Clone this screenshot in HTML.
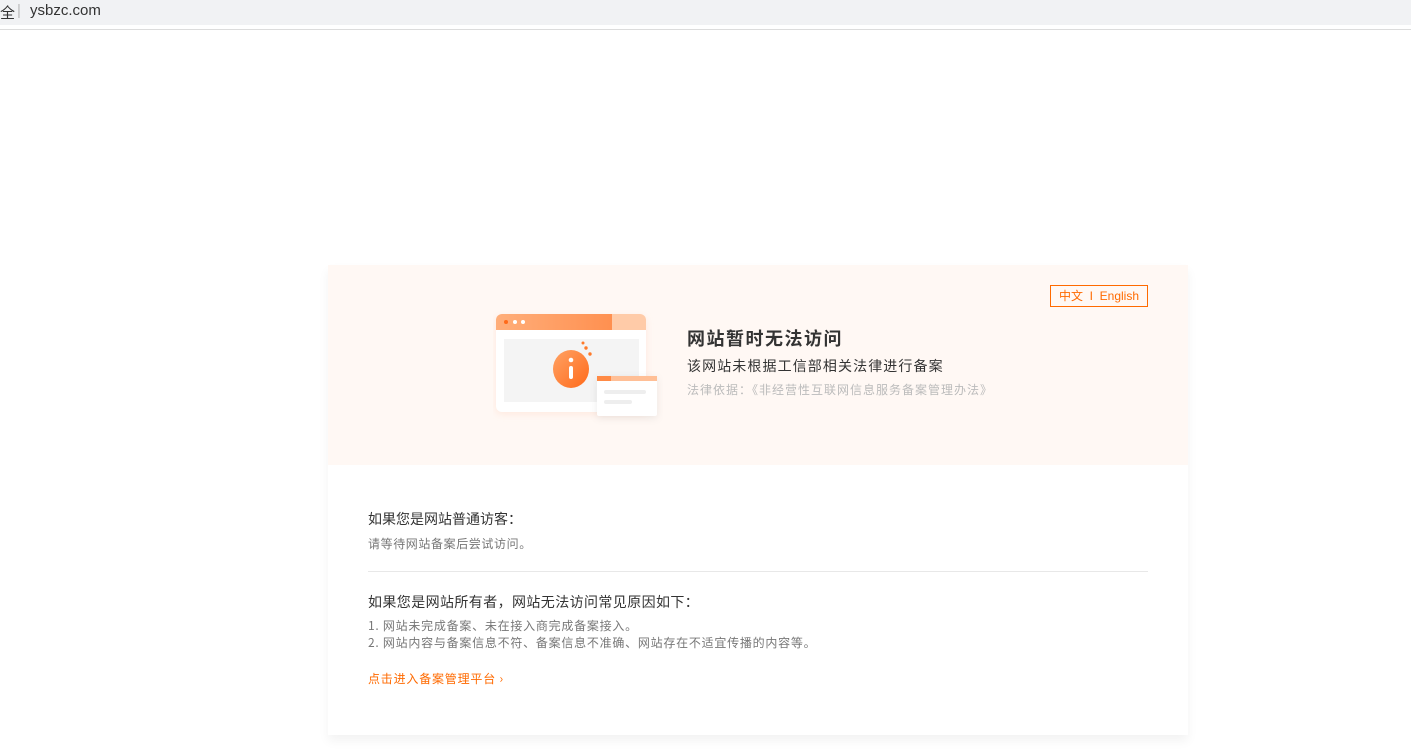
<!DOCTYPE html>
<html><head><meta charset="utf-8"><style>
*{margin:0;padding:0;box-sizing:border-box}
body{width:1411px;height:755px;background:#fff;font-family:"Liberation Sans","Noto Sans CJK SC",sans-serif;position:relative;overflow:hidden}
.bar{position:absolute;left:0;top:0;width:1411px;height:25px;background:#f1f2f4}
.bar span{position:absolute;top:2px;font-size:15px;color:#333}
.line{position:absolute;left:0;top:29px;width:1411px;height:1px;background:#dcdcdc}
.card{position:absolute;left:328px;top:265px;width:860px;height:470px;box-shadow:0 6px 10px rgba(0,0,0,.05)}
.top{height:200px;background:#fff8f4;position:relative}
.lang{position:absolute;left:722px;top:20px;width:98px;height:22px;border:1px solid #ff6a00;color:#ff6a00;font-size:12px;line-height:20px;text-align:center}
.t{position:absolute;left:359px;font-family:"Noto Sans CJK SC",sans-serif;white-space:nowrap}
.sec{position:absolute;left:40px;font-family:"Noto Sans CJK SC",sans-serif;white-space:nowrap}
</style></head><body>
<div class="bar"><span style="left:0">全</span><span style="left:17px;color:#bbb;top:2px">|</span><span style="left:30px">ysbzc.com</span></div>
<div class="line"></div>
<div class="card">
<div class="top">
<div class="lang">中文 &nbsp;I&nbsp; English</div>
<svg style="position:absolute;left:165px;top:45px" width="170" height="115">
<defs><linearGradient id="g" x1="0" x2="1"><stop offset="0" stop-color="#ffae7a"/><stop offset="1" stop-color="#ff9050"/></linearGradient>
<linearGradient id="c" x1="0" y1="0" x2="1" y2="1"><stop offset="0" stop-color="#ffa264"/><stop offset="1" stop-color="#ff6a1a"/></linearGradient></defs>
<rect x="3" y="4" width="150" height="98" rx="6" fill="#fff" style="filter:drop-shadow(0 2px 4px rgba(255,150,100,.15))"/>
<path d="M3 10a6 6 0 0 1 6-6h110v16H3z" fill="url(#g)"/>
<path d="M119 4h28a6 6 0 0 1 6 6v10h-34z" fill="#ffcba8"/>
<circle cx="13" cy="12" r="2" fill="#ff6a1a"/><circle cx="22" cy="12" r="2" fill="#fff"/><circle cx="30" cy="12" r="2" fill="#fff"/>
<rect x="11" y="29" width="135" height="63" fill="#f4f4f4"/>
<ellipse cx="78" cy="59" rx="18" ry="19" fill="url(#c)"/>
<rect x="76" y="56" width="4" height="13" rx="2" fill="#fff"/><circle cx="78" cy="50" r="2.3" fill="#fff"/>
<circle cx="93" cy="38" r="1.7" fill="#ff7a2a"/><circle cx="97" cy="44" r="1.7" fill="#ff7a2a"/><circle cx="90" cy="33" r="1.5" fill="#ff7a2a"/>
<rect x="104" y="66" width="60" height="40" rx="2" fill="#fff" style="filter:drop-shadow(0 2px 4px rgba(0,0,0,.08))"/>
<rect x="104" y="66" width="60" height="5" fill="#ffbf96"/><rect x="104" y="66" width="14" height="5" fill="#ff8a45"/>
<rect x="111" y="80" width="42" height="4" rx="2" fill="#eee"/><rect x="111" y="90" width="28" height="4" rx="2" fill="#eee"/>
</svg>
<div class="t" style="top:60px;font-size:18px;font-weight:bold;color:#333;letter-spacing:1.5px">网站暂时无法访问</div>
<div class="t" style="top:91px;font-size:14px;color:#333;letter-spacing:1.1px">该网站未根据工信部相关法律进行备案</div>
<div class="t" style="top:116px;font-size:12px;color:#bbb;letter-spacing:1px">法律依据：《非经营性互联网信息服务备案管理办法》</div>
</div>
<div class="sec" style="top:244px;font-size:14px;color:#333">如果您是网站普通访客：</div>
<div class="sec" style="top:270px;font-size:12px;color:#777;letter-spacing:.6px">请等待网站备案后尝试访问。</div>
<div style="position:absolute;left:40px;top:306px;width:780px;height:1px;background:#e8e8e8"></div>
<div class="sec" style="top:327px;font-size:14px;color:#333;letter-spacing:.4px">如果您是网站所有者，网站无法访问常见原因如下：</div>
<div class="sec" style="top:352px;font-size:12px;color:#777;line-height:17px;letter-spacing:.75px">1. 网站未完成备案、未在接入商完成备案接入。<br>2. 网站内容与备案信息不符、备案信息不准确、网站存在不适宜传播的内容等。</div>
<div class="sec" style="top:405px;font-size:12px;color:#ff6a00;letter-spacing:.8px">点击进入备案管理平台 ›</div>
</div>
</body></html>
